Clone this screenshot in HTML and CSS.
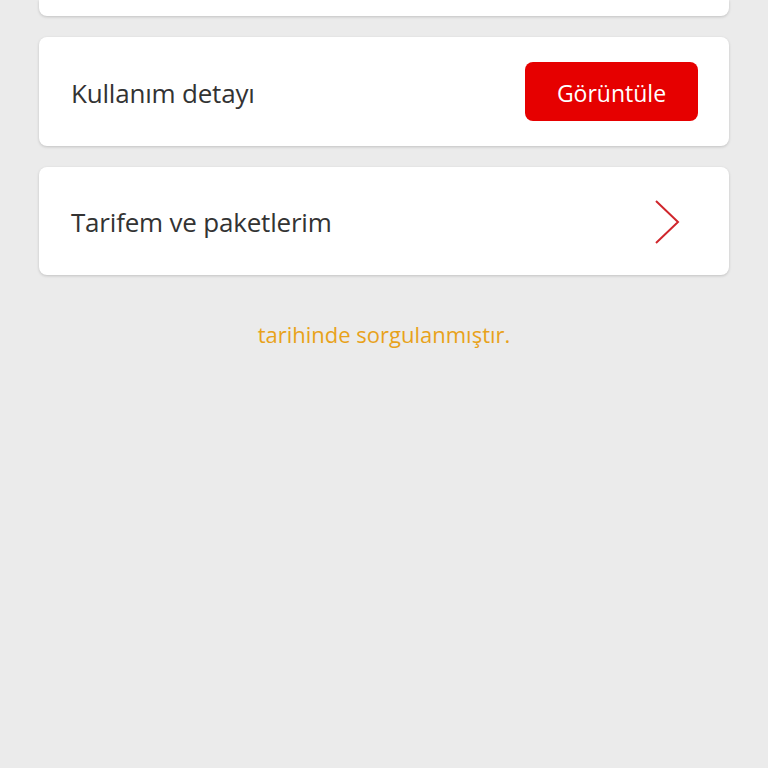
FILE: index.html
```html
<!DOCTYPE html>
<html lang="tr">
<head>
  <meta charset="UTF-8">
  <meta name="viewport" content="width=device-width, initial-scale=1.0">
  <title>Hesabım</title>
  <link rel="stylesheet" href="styles.css">
</head>
<body>
  <div class="page">
    <!-- üstte kesilen kart -->
    <div class="card card-top"></div>

    <div class="card row">
      <span class="label">Kullanım detayı</span>
      <button class="btn">Görüntüle</button>
    </div>

    <div class="card row">
      <span class="label">Tarifem ve paketlerim</span>
      <svg class="chevron" width="28" height="46" viewBox="0 0 28 46">
        <polyline points="2,2 24,23 2,44" fill="none" stroke="#d0262c" stroke-width="2"/>
      </svg>
    </div>

    <p class="note">tarihinde sorgulanmıştır.</p>
  </div>
</body>
</html>
```

FILE: styles.css
```css
body {
  margin: 0;
  background: #ebebeb;
  font-family: "Open Sans", "Noto Sans", sans-serif;
}
.page {
  padding: 0 39px;
  display: flex;
  flex-direction: column;
  gap: 21px;
}
.card {
  background: #fff;
  border-radius: 8px;
  box-shadow: 0 1px 3px rgba(0, 0, 0, 0.18);
}
.card-top {
  height: 16px;
  border-radius: 0 0 8px 8px;
}
.row {
  height: 108.5px;
  box-sizing: border-box;
  display: flex;
  align-items: center;
  justify-content: space-between;
  padding: 0 31px 0 32px;
}
.label {
  padding-top: 3px;
  font-size: 26px;
  letter-spacing: -0.2px;
  color: #333;
}
.btn {
  width: 173px;
  height: 59px;
  padding-top: 4px;
  background: #e60000;
  color: #fff;
  border: none;
  border-radius: 8px;
  font-family: inherit;
  font-size: 23px;
  cursor: pointer;
}
.chevron {
  margin-right: 16px;
  margin-top: 2px;
}
.note {
  margin: 23px 0 0;
  text-align: center;
  color: #e8a21a;
  font-size: 22px;
}
```
